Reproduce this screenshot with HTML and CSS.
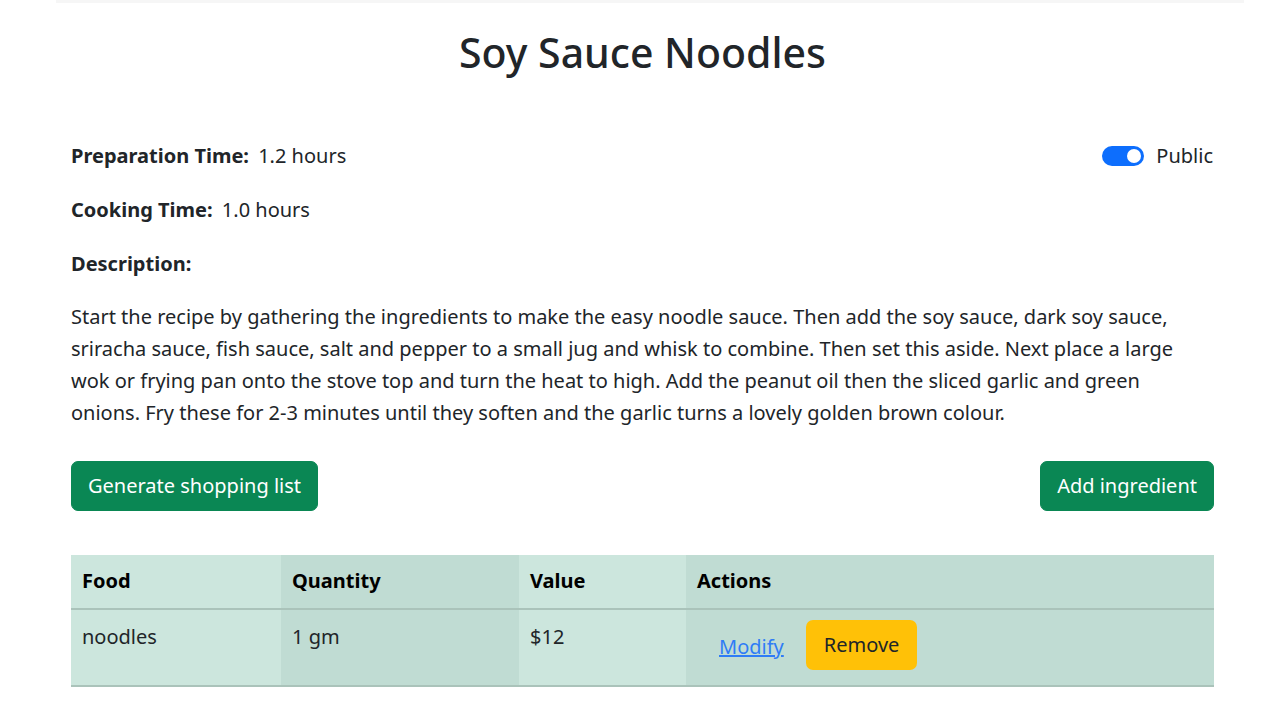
FILE: index.html
```html
<!DOCTYPE html>
<html lang="en">
<head>
<meta charset="utf-8">
<title>Soy Sauce Noodles</title>
<link rel="stylesheet" href="styles.css">
</head>
<body>
<div class="topstrip"></div>
<main class="page">
  <h1 class="title">Soy Sauce Noodles</h1>
  <section class="details">
    <div class="meta-row">
      <p class="field"><span class="label">Preparation Time:</span> 1.2 hours</p>
      <label class="switch">
        <span class="switch-track"><span class="switch-knob"></span></span>
        <span class="switch-text">Public</span>
      </label>
    </div>
    <p class="field"><span class="label">Cooking Time:</span> 1.0 hours</p>
    <p class="field field-last"><span class="label">Description:</span></p>
    <p class="desc">Start the recipe by gathering the ingredients to make the easy noodle sauce. Then add the soy sauce, dark soy sauce, sriracha sauce, fish sauce, salt and pepper to a small jug and whisk to combine. Then set this aside. Next place a large wok or frying pan onto the stove top and turn the heat to high. Add the peanut oil then the sliced garlic and green onions. Fry these for 2-3 minutes until they soften and the garlic turns a lovely golden brown colour.</p>
  </section>
  <div class="actions-bar">
    <button class="btn btn-green">Generate shopping list</button>
    <button class="btn btn-green">Add ingredient</button>
  </div>
  <table class="ing-table">
    <colgroup>
      <col class="c1"><col class="c2"><col class="c3"><col class="c4">
    </colgroup>
    <thead>
      <tr><th>Food</th><th class="dark">Quantity</th><th>Value</th><th class="dark">Actions</th></tr>
    </thead>
    <tbody>
      <tr>
        <td>noodles</td>
        <td class="dark">1 gm</td>
        <td>$12</td>
        <td class="dark">
          <div class="cell-actions">
            <a class="link-btn" href="#">Modify</a>
            <button class="btn btn-yellow">Remove</button>
          </div>
        </td>
      </tr>
    </tbody>
  </table>
</main>
</body>
</html>
```
FILE: styles.css
```css
* { box-sizing: border-box; }
html, body { margin: 0; padding: 0; background: #fff; }
body {
  font-family: "Noto Sans", "Open Sans", "Liberation Sans", sans-serif;
  font-size: 20px;
  line-height: 32px;
  color: #212529;
}
.topstrip {
  height: 3px;
  margin: 0 36px 0 56px;
  background: #f6f6f6;
}
.page {
  width: 1143px;
  margin: 0 0 0 71px;
}
.title {
  margin: 23px 0 0;
  text-align: center;
  font-size: 41px;
  line-height: 52px;
  font-weight: 500;
}
.details { margin-top: 62px; }
.meta-row {
  display: flex;
  justify-content: space-between;
  align-items: center;
  margin-bottom: 22px;
}
.field { margin: 0 0 22px; }
.field-last { margin-bottom: 21px; }
.meta-row .field { margin: 0; }
.label { font-weight: 700; margin-right: 4px; }
.switch { display: flex; align-items: center; gap: 12px; }
.switch-track {
  width: 42px; height: 20px;
  border-radius: 10px;
  background: #0d6efd;
  display: flex; align-items: center; justify-content: flex-end;
  padding: 0 3px;
}
.switch-knob { width: 14px; height: 14px; border-radius: 50%; background: #fff; }
.switch-text { color: #212529; margin-right: 1px; }
.desc { margin: 0; }
.actions-bar {
  display: flex;
  justify-content: space-between;
  margin-top: 32px;
}
.btn {
  font-family: inherit;
  font-size: 20px;
  line-height: 32px;
  border: 1px solid transparent;
  border-radius: 7px;
  cursor: pointer;
}
.btn-green {
  background: #0a8754;
  color: #fff;
  padding: 8px 16px;
  border-color: #0a8754;
}
.ing-table {
  margin-top: 44px;
  width: 1143px;
  border-collapse: collapse;
  table-layout: fixed;
}
.c1 { width: 210px; }
.c2 { width: 238px; }
.c3 { width: 167px; }
.c4 { width: 528px; }
.ing-table th, .ing-table td {
  background: #cce6dd;
  text-align: left;
  vertical-align: top;
  padding: 10px 11px;
  border-bottom: 2px solid #aac3ba;
}
.ing-table th { font-weight: 700; color: #000; padding-bottom: 11px; }
.ing-table td { height: 77px; padding-top: 11px; }
.ing-table .dark { background: #c0dcd3; }
.cell-actions {
  display: flex;
  align-items: center;
  gap: 22px;
  padding-left: 22px;
  margin-top: -1px;
}
.link-btn {
  color: #2f7cf6;
  text-decoration: underline;
  padding-top: 4px;
}
.btn-yellow {
  background: #ffc107;
  color: #212529;
  padding: 8px 17px;
  border-radius: 7px;
}
```
